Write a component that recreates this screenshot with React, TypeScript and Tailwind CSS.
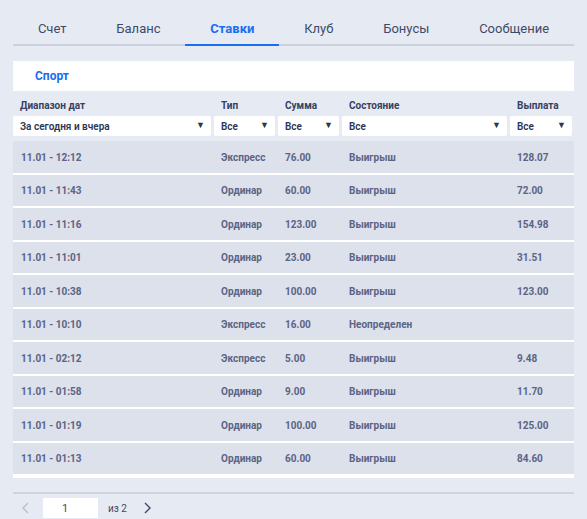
import { useState } from "react";

interface Bet {
  time: string;
  type: string;
  sum: string;
  state: string;
  payout: string;
}

const tabs = ["Счет", "Баланс", "Ставки", "Клуб", "Бонусы", "Сообщение"];

const bets: Bet[] = [
  { time: "11.01 - 12:12", type: "Экспресс", sum: "76.00", state: "Выигрыш", payout: "128.07" },
  { time: "11.01 - 11:43", type: "Ординар", sum: "60.00", state: "Выигрыш", payout: "72.00" },
  { time: "11.01 - 11:16", type: "Ординар", sum: "123.00", state: "Выигрыш", payout: "154.98" },
  { time: "11.01 - 11:01", type: "Ординар", sum: "23.00", state: "Выигрыш", payout: "31.51" },
  { time: "11.01 - 10:38", type: "Ординар", sum: "100.00", state: "Выигрыш", payout: "123.00" },
  { time: "11.01 - 10:10", type: "Экспресс", sum: "16.00", state: "Неопределен", payout: "" },
  { time: "11.01 - 02:12", type: "Экспресс", sum: "5.00", state: "Выигрыш", payout: "9.48" },
  { time: "11.01 - 01:58", type: "Ординар", sum: "9.00", state: "Выигрыш", payout: "11.70" },
  { time: "11.01 - 01:19", type: "Ординар", sum: "100.00", state: "Выигрыш", payout: "125.00" },
  { time: "11.01 - 01:13", type: "Ординар", sum: "60.00", state: "Выигрыш", payout: "84.60" },
];

// column widths, px
const cols = ["w-[198px]", "w-[61px]", "w-[61px]", "w-[165px]", "w-[62px]"];

function Select({ value }: { value: string }) {
  return (
    <div className="h-[20px] bg-white rounded-[2px] flex items-center justify-between pl-[7px] pr-[6px]">
      <span className="text-[10px] font-semibold text-[#2c3654]">{value}</span>
      <span className="text-[9px] text-[#2c3654]">▼</span>
    </div>
  );
}

export default function App() {
  const [active, setActive] = useState(2);
  const [page, setPage] = useState("1");

  return (
    <div
      className="w-full h-[519px] overflow-hidden bg-[#e6eaf3] px-[13px]"
      style={{ fontFamily: "Roboto, 'Noto Sans', sans-serif" }}
    >
      {/* Tabs */}
      <div className="flex h-[46px] border-b-2 border-[#ccd2dd]">
        {tabs.map((t, i) => (
          <div
            key={t}
            onClick={() => setActive(i)}
            className={
              i === active
                ? "flex-auto text-center pt-[21px] text-[13px] leading-[16px] font-bold text-[#1a6ef0] border-b-2 border-[#1a6ef0] -mb-[2px] cursor-pointer"
                : "flex-auto text-center pt-[21px] text-[13px] leading-[16px] text-[#3d4a68] cursor-pointer"
            }
          >
            {t}
          </div>
        ))}
      </div>

      {/* Sport bar */}
      <div className="mt-[15px] h-[30px] bg-white flex items-center pl-[22px]">
        <span className="text-[12px] font-bold text-[#1a6ef0]">Спорт</span>
      </div>

      {/* Filters */}
      <div className="flex gap-[3px] mt-[9px]">
        {["Диапазон дат", "Тип", "Сумма", "Состояние", "Выплата"].map((h, i) => (
          <div key={h} className={cols[i]}>
            <div className="pl-[7px] h-[16px] text-[10px] font-bold text-[#36415f] leading-[12px]">
              {h}
            </div>
            <Select value={i === 0 ? "За сегодня и вчера" : "Все"} />
          </div>
        ))}
      </div>

      {/* Rows */}
      <div className="mt-[5px]">
        {bets.map((b) => (
          <div
            key={b.time}
            className="flex gap-[3px] h-[33.5px] bg-[#dce1ec] border-b-2 border-white items-center pt-[1px] text-[10px] font-bold text-[#5b6483]"
          >
            <div className={`${cols[0]} pl-[8px]`}>{b.time}</div>
            <div className={`${cols[1]} pl-[7px]`}>{b.type}</div>
            <div className={`${cols[2]} pl-[7px]`}>{b.sum}</div>
            <div className={`${cols[3]} pl-[7px]`}>{b.state}</div>
            <div className={`${cols[4]} pl-[7px]`}>{b.payout}</div>
          </div>
        ))}
        <div className="h-[2px] bg-white" />
      </div>

      {/* Pagination */}
      <div className="mt-[14px] border-t-2 border-[#cfd4df] pt-[4px] flex items-center h-[26px]">
        <span className="w-[30px] pl-[8px] text-[#b9c0cd]">
          <svg width="10" height="12" viewBox="0 0 10 12" fill="none" stroke="currentColor" strokeWidth="1.4">
            <path d="M7 1 L2 6 L7 11" />
          </svg>
        </span>
        <input
          value={page}
          onChange={(e) => setPage(e.target.value)}
          className="w-[55px] h-[20px] bg-white pl-[19px] text-[11px] text-[#3d4a68] outline-none"
        />
        <span className="ml-[10px] text-[10px] text-[#3d4a68]">из 2</span>
        <span className="ml-[15px] text-[#3d4a68]">
          <svg width="10" height="12" viewBox="0 0 10 12" fill="none" stroke="currentColor" strokeWidth="1.4">
            <path d="M3 1 L8 6 L3 11" />
          </svg>
        </span>
      </div>
    </div>
  );
}
